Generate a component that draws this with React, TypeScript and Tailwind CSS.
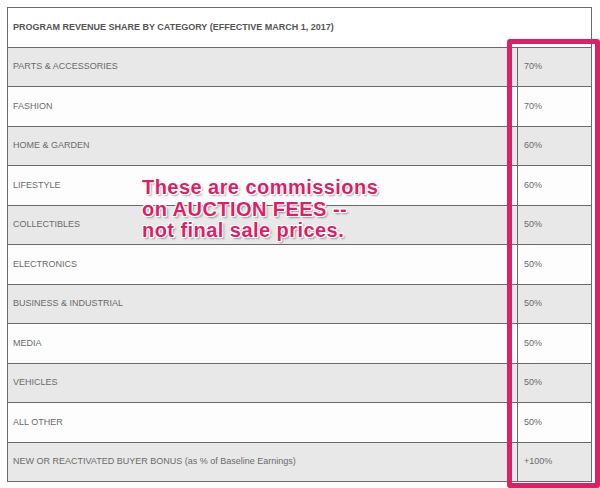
import React from "react";

const rows: [string, string][] = [
  ["PARTS & ACCESSORIES", "70%"],
  ["FASHION", "70%"],
  ["HOME & GARDEN", "60%"],
  ["LIFESTYLE", "60%"],
  ["COLLECTIBLES", "50%"],
  ["ELECTRONICS", "50%"],
  ["BUSINESS & INDUSTRIAL", "50%"],
  ["MEDIA", "50%"],
  ["VEHICLES", "50%"],
  ["ALL OTHER", "50%"],
  ["NEW OR REACTIVATED BUYER BONUS (as % of Baseline Earnings)", "+100%"],
];

export default function App() {
  return (
    <div
      className="relative w-[600px] h-[488px] bg-white pt-[7px] pl-[7px] overflow-hidden"
      style={{ fontFamily: '"Liberation Sans", Arial, sans-serif' }}
    >
      <div className="w-[585px] border border-[#6a6a6a] flex flex-col">
        <div className="h-[39px] flex items-center pl-[5px] bg-white text-[9px] font-bold text-[#555]">
          PROGRAM REVENUE SHARE BY CATEGORY (EFFECTIVE MARCH 1, 2017)
        </div>
        {rows.map(([label, value], i) => (
          <div
            key={label}
            className={
              "flex border-t border-[#6a6a6a] " +
              (i % 2 === 0 ? "h-[39px] bg-[#e8e8e8]" : "h-[40px] bg-[#fdfdfd]")
            }
          >
            <div className="w-[510px] flex items-center pl-[5px] text-[9px] text-[#6b6b6b] border-r border-[#6a6a6a]">
              {label}
            </div>
            <div className="flex-1 flex items-center pl-[6px] text-[9px] text-[#6b6b6b]">
              {value}
            </div>
          </div>
        ))}
      </div>

      <div className="absolute left-[507px] top-[39px] w-[93px] h-[449px] border-[5px] border-[#dc1f67] rounded-[3px]" />

      <div
        className="absolute left-[142px] top-[177px] text-[20px] tracking-[0.45px] leading-[21.5px] font-bold text-[#dc1f67] [text-shadow:1px_1px_0_#fff,-1px_-1px_0_#fff,1px_-1px_0_#fff,-1px_1px_0_#fff,0_1px_0_#fff,1px_0_0_#fff,2px_2px_2px_rgba(0,0,0,0.35)]"
      >
        <div>These are commissions</div>
        <div>on AUCTION FEES --</div>
        <div>not final sale prices.</div>
      </div>
    </div>
  );
}
